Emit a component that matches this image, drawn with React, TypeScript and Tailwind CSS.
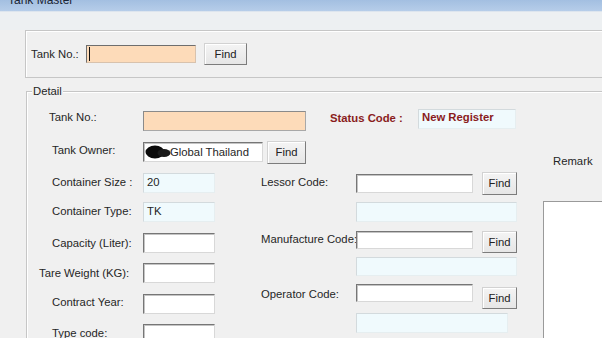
import React from "react";

const Btn = ({ cls }: { cls: string }) => (
  <div
    className={
      "flex items-center justify-center bg-linear-to-b from-[#f4f4f4] to-[#e6e6e6] border border-t-[#d2d2d2] border-l-[#d2d2d2] border-r-[#7c7c7c] border-b-[#7c7c7c] shadow-[inset_1px_1px_0_#ffffff] text-[11.3px] leading-[13px] text-[#222] shrink-0 " +
      cls
    }
  >
    Find
  </div>
);

const whiteBox =
  "bg-white border border-t-[#767676] border-l-[#767676] border-r-[#d8d8d8] border-b-[#d8d8d8] shadow-[inset_1px_1px_0_#c4c4c4] shrink-0";
const cyanBox =
  "bg-[#f0fafd] border border-t-[#d3dadd] border-l-[#d3dadd] border-r-[#e6eef0] border-b-[#e6eef0] shrink-0";

export default function App() {
  return (
    <div className="w-[602px] h-[338px] overflow-hidden bg-[#f0f0f0] flex flex-col font-['Liberation_Sans',Arial,sans-serif] text-[11.3px] leading-[13px] text-[#262626]">
      {/* title bar */}
      <div className="h-[11px] shrink-0 overflow-hidden bg-linear-to-b from-[#a3bfe1] to-[#b6cde9] pl-[8px]">
        <div className="text-[12px] leading-[12px] -mt-[6px] text-[#1b2535]">Tank Master</div>
      </div>
      {/* light band */}
      <div className="h-[19px] shrink-0 bg-[#edf0f2] border-t border-[#dde5ee]" />

      {/* search group */}
      <div className="ml-[25px] h-[48px] shrink-0 border-t border-l border-b border-[#c6c6c6] shadow-[inset_1px_1px_0_#ffffff] flex items-center">
        <span className="ml-[5px] w-[55px] shrink-0">Tank No.:</span>
        <div className="relative w-[110px] h-[18px] shrink-0 bg-[#fddbb9] border border-t-[#6e6e6e] border-l-[#6e6e6e] border-r-[#d8c2ad] border-b-[#d8c2ad]">
          <span className="absolute left-[2px] top-[1px] w-[1px] h-[14px] bg-[#111]" />
        </div>
        <Btn cls="ml-[8px] w-[43px] h-[22px]" />
      </div>

      {/* detail group */}
      <div className="relative ml-[26px] mt-[13px] flex-1 border-t border-l border-[#c6c6c6] shadow-[inset_1px_1px_0_#ffffff] flex flex-col">
        <span className="absolute left-[5px] -top-[7px] px-[1px] bg-[#f0f0f0]">Detail</span>

        {/* row A */}
        <div className="mt-[17px] flex items-start h-[22px] shrink-0">
          <span className="w-[116px] pl-[22px] mt-[2px] shrink-0">Tank No.:</span>
          <div className="w-[163px] h-[20px] mt-[2px] shrink-0 bg-[#fddbb9] border border-t-[#8a8a8a] border-l-[#8a8a8a] border-r-[#a8a8a8] border-b-[#a8a8a8]" />
          <span className="w-[112px] pl-[24px] mt-[3px] shrink-0 font-bold text-[#8a1c1c] whitespace-nowrap">Status Code :</span>
          <div className={cyanBox + " w-[98px] h-[20px] pl-[3px] pt-[1px] font-bold text-[#8a1c1c] whitespace-nowrap"}>New Register</div>
        </div>

        {/* row B */}
        <div className="mt-[10px] flex items-start h-[23px] shrink-0">
          <span className="w-[116px] pl-[25px] mt-[3px] shrink-0">Tank Owner:</span>
          <div className={whiteBox + " w-[120px] h-[20px] mt-[1px] flex items-center overflow-hidden"}>
            <svg width="26" height="16" viewBox="0 0 26 16" className="ml-[1px] shrink-0">
              <ellipse cx="10" cy="8" rx="9.5" ry="6.5" fill="#0a0a0a" />
              <ellipse cx="19" cy="9" rx="6.5" ry="4" fill="#1a1a1a" />
            </svg>
            <span className="-ml-[1px] whitespace-nowrap">Global Thailand</span>
          </div>
          <Btn cls="ml-[4px] w-[39px] h-[23px]" />
          <span className="ml-[247px] mt-[14px] shrink-0">Remark</span>
        </div>

        {/* row C */}
        <div className="mt-[8px] flex items-start shrink-0">
          {/* left column */}
          <div className="w-[234px] shrink-0 flex flex-col">
            <div className="mt-[1px] flex items-center h-[20px]">
              <span className="w-[116px] pl-[25px] shrink-0 -mt-[2px] whitespace-nowrap">Container Size :</span>
              <div className={cyanBox + " w-[72px] h-[20px] pl-[3px] pt-[2px]"}>20</div>
            </div>
            <div className="mt-[9px] flex items-center h-[20px]">
              <span className="w-[116px] pl-[25px] shrink-0 -mt-[2px] whitespace-nowrap">Container Type:</span>
              <div className={cyanBox + " w-[72px] h-[20px] pl-[3px] pt-[2px]"}>TK</div>
            </div>
            <div className="mt-[11px] flex items-center h-[20px]">
              <span className="w-[116px] pl-[25px] shrink-0 mt-[1px] whitespace-nowrap">Capacity (Liter):</span>
              <div className={whiteBox + " w-[72px] h-[20px]"} />
            </div>
            <div className="mt-[10px] flex items-center h-[20px]">
              <span className="w-[116px] pl-[12px] shrink-0 whitespace-nowrap">Tare Weight (KG):</span>
              <div className={whiteBox + " w-[72px] h-[20px]"} />
            </div>
            <div className="mt-[11px] flex items-center h-[20px]">
              <span className="w-[116px] pl-[25px] shrink-0 -mt-[3px] whitespace-nowrap">Contract Year:</span>
              <div className={whiteBox + " w-[72px] h-[20px]"} />
            </div>
            <div className="mt-[10px] flex items-center h-[20px]">
              <span className="w-[116px] pl-[25px] shrink-0 -mt-[1px] whitespace-nowrap">Type code:</span>
              <div className={whiteBox + " w-[72px] h-[20px]"} />
            </div>
          </div>

          {/* middle column */}
          <div className="w-[256px] shrink-0 flex flex-col">
            <div className="flex items-start h-[24px]">
              <span className="w-[95px] mt-[4px] shrink-0 whitespace-nowrap">Lessor Code:</span>
              <div className={whiteBox + " w-[117px] h-[19px] mt-[2px]"} />
              <Btn cls="ml-[9px] w-[35px] h-[23px]" />
            </div>
            <div className={cyanBox + " ml-[95px] mt-[6px] w-[161px] h-[20px]"} />
            <div className="mt-[9px] flex items-start h-[22px]">
              <span className="w-[95px] mt-[2px] shrink-0 whitespace-nowrap">Manufacture Code:</span>
              <div className={whiteBox + " w-[117px] h-[18px]"} />
              <Btn cls="ml-[9px] w-[35px] h-[22px]" />
            </div>
            <div className={cyanBox + " ml-[95px] mt-[4px] w-[161px] h-[19px]"} />
            <div className="mt-[8px] flex items-start h-[25px]">
              <span className="w-[95px] mt-[4px] shrink-0 whitespace-nowrap">Operator Code:</span>
              <div className={whiteBox + " w-[117px] h-[18px]"} />
              <Btn cls="ml-[9px] mt-[3px] w-[35px] h-[22px]" />
            </div>
            <div className={cyanBox + " ml-[95px] mt-[4px] w-[152px] h-[20px]"} />
          </div>

          {/* remark box */}
          <div className="ml-[26px] mt-[29px] w-[80px] h-[150px] shrink-0 bg-white border border-t-[#9a9a9a] border-l-[#9a9a9a] border-r-[#dcdcdc] border-b-[#dcdcdc]" />
        </div>
      </div>
    </div>
  );
}
